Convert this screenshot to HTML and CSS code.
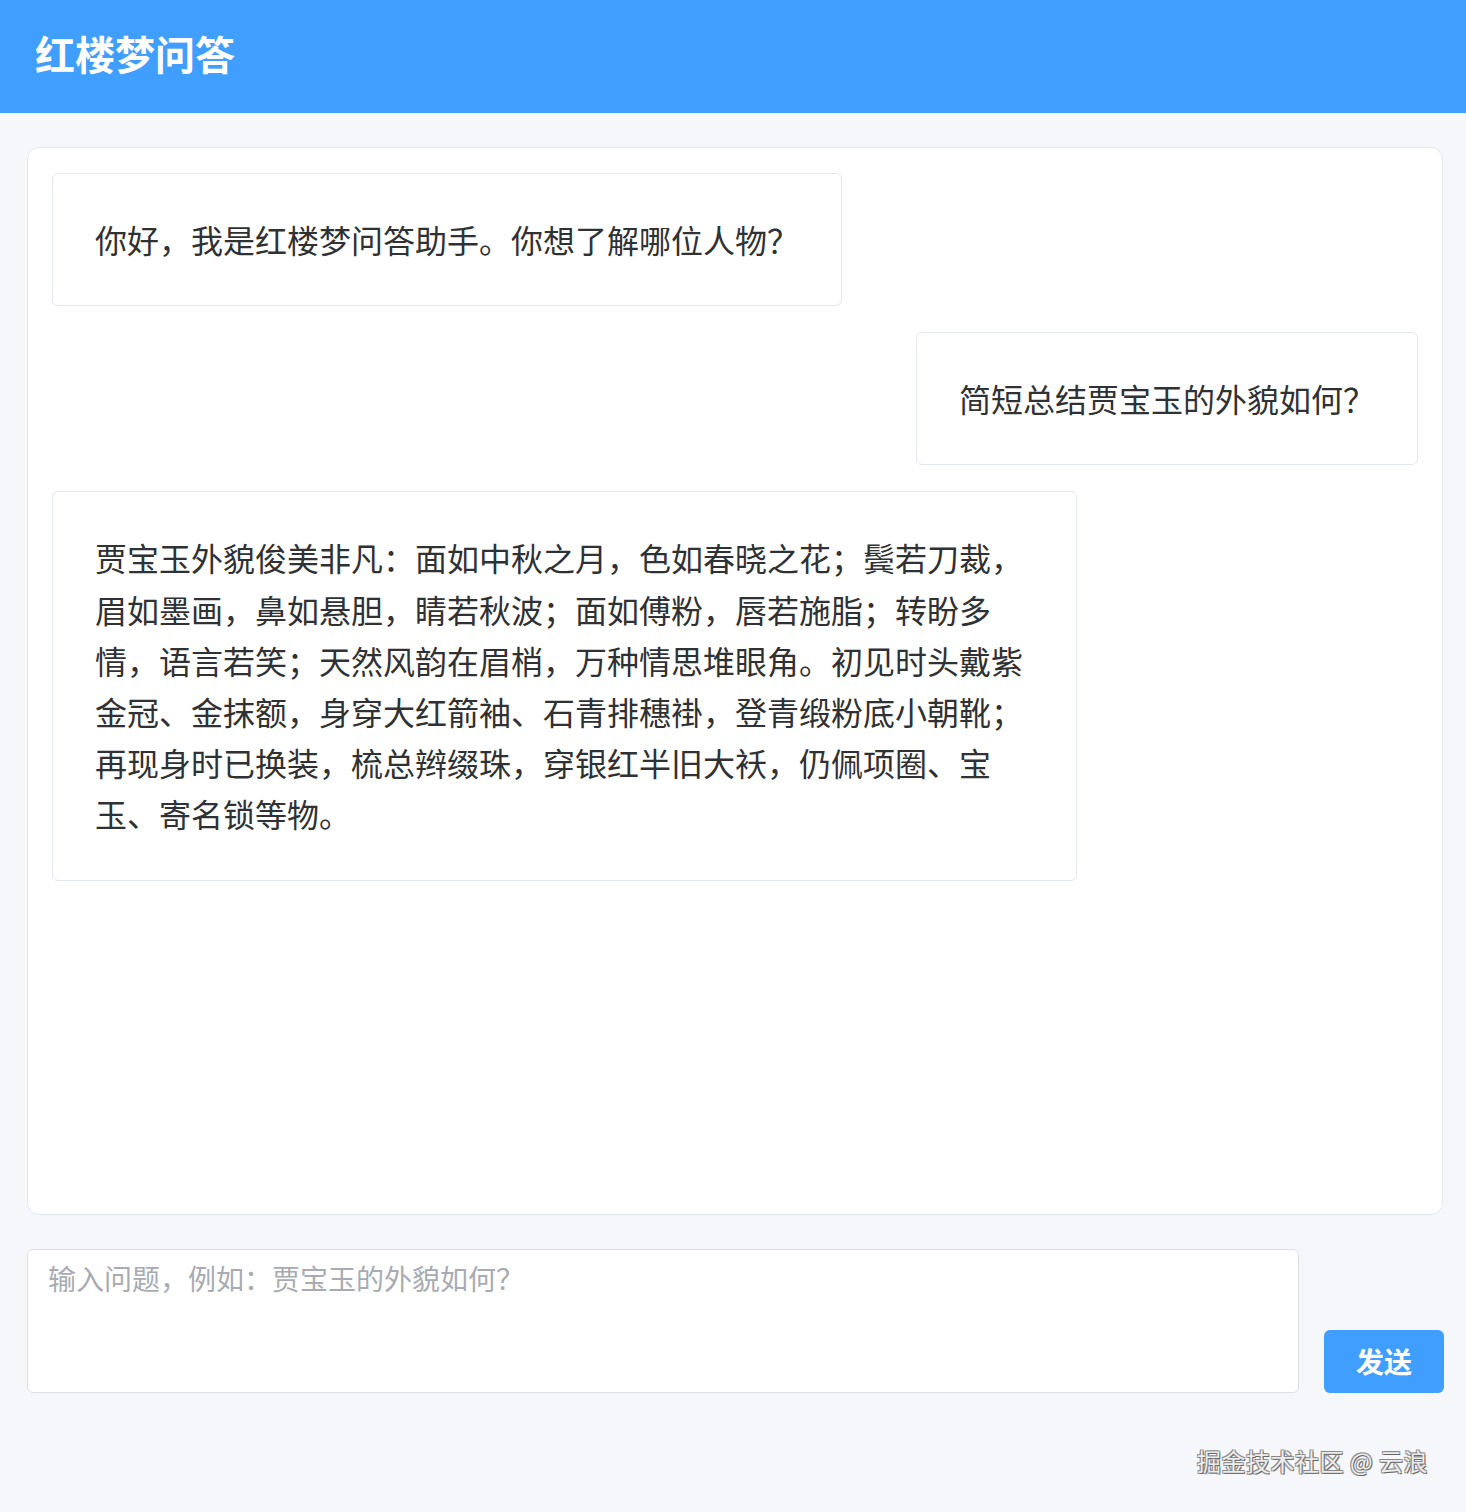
FILE: index.html
```html
<!DOCTYPE html>
<html lang="zh-CN">
<head>
<meta charset="utf-8">
<title>红楼梦问答</title>
<link rel="stylesheet" href="styles.css">
</head>
<body>
<header class="topbar">
  <h1 class="title">红楼梦问答</h1>
</header>
<main class="main">
  <section class="chat">
    <div class="msg msg-bot">你好，我是红楼梦问答助手。你想了解哪位人物？</div>
    <div class="msg msg-user">简短总结贾宝玉的外貌如何？</div>
    <div class="msg msg-bot">贾宝玉外貌俊美非凡：面如中秋之月，色如春晓之花；鬓若刀裁，眉如墨画，鼻如悬胆，睛若秋波；面如傅粉，唇若施脂；转盼多情，语言若笑；天然风韵在眉梢，万种情思堆眼角。初见时头戴紫金冠、金抹额，身穿大红箭袖、石青排穗褂，登青缎粉底小朝靴；再现身时已换装，梳总辫缀珠，穿银红半旧大袄，仍佩项圈、宝玉、寄名锁等物。</div>
  </section>
  <div class="composer">
    <textarea class="input" placeholder="输入问题，例如：贾宝玉的外貌如何？"></textarea>
    <button class="send" type="button">发送</button>
  </div>
</main>
<div class="watermark">掘金技术社区 @ 云浪</div>
</body>
</html>
```

FILE: styles.css
```css
* { box-sizing: border-box; }
html, body {
  margin: 0;
  padding: 0;
}
body {
  background: #f5f7fa;
  font-family: "Noto Sans CJK SC", "Noto Sans", sans-serif;
  color: #303133;
  width: 1466px;
  height: 1512px;
  position: relative;
  overflow: hidden;
}
.topbar {
  height: 113px;
  background: #409eff;
  display: flex;
  align-items: center;
  padding: 0 0 8px 35px;
}
.title {
  margin: 0;
  color: #fff;
  font-size: 40px;
  font-weight: 700;
  line-height: 1;
  letter-spacing: 0;
}
.main {
  padding: 34px 22px 0 27px;
  display: flex;
  flex-direction: column;
  gap: 34px;
}
.chat {
  height: 1068px;
  width: 1416px;
  background: #fff;
  border: 1px solid #e4e7ed;
  border-radius: 12px;
  padding: 25px 24px;
  display: flex;
  flex-direction: column;
  align-items: flex-start;
  gap: 26px;
}
.msg {
  max-width: 75%;
  background: #fff;
  border: 1px solid #e4e7ed;
  border-radius: 6px;
  padding: 40px 42px;
  font-size: 32px;
  line-height: 1.6;
  color: #303133;
}
.msg-user {
  align-self: flex-end;
}
.composer {
  display: flex;
  align-items: flex-end;
  gap: 25px;
}
.input {
  flex: 1;
  height: 144px;
  border: 1px solid #dcdfe6;
  border-radius: 6px;
  background: #fff;
  padding: 7px 20px;
  font-family: "Noto Sans CJK SC", "Noto Sans", sans-serif;
  font-size: 28px;
  line-height: 1.5;
  color: #303133;
  resize: none;
  outline: none;
}
.input::placeholder {
  color: #a8abb2;
}
.send {
  width: 120px;
  height: 63px;
  border: none;
  border-radius: 6px;
  background: #409eff;
  color: #fff;
  font-family: "Noto Sans CJK SC", "Noto Sans", sans-serif;
  font-size: 28px;
  font-weight: 700;
  padding: 0 0 2px;
}
.watermark {
  position: absolute;
  right: 38px;
  top: 1443px;
  font-size: 24px;
  line-height: 36px;
  letter-spacing: 0.5px;
  color: #ececec;
  text-shadow: -1px -1px 0 #888, 1px 1px 0 #666, 1px -1px 0 #999, -1px 1px 0 #999;
  font-family: "Noto Sans CJK SC", sans-serif;
}
```
